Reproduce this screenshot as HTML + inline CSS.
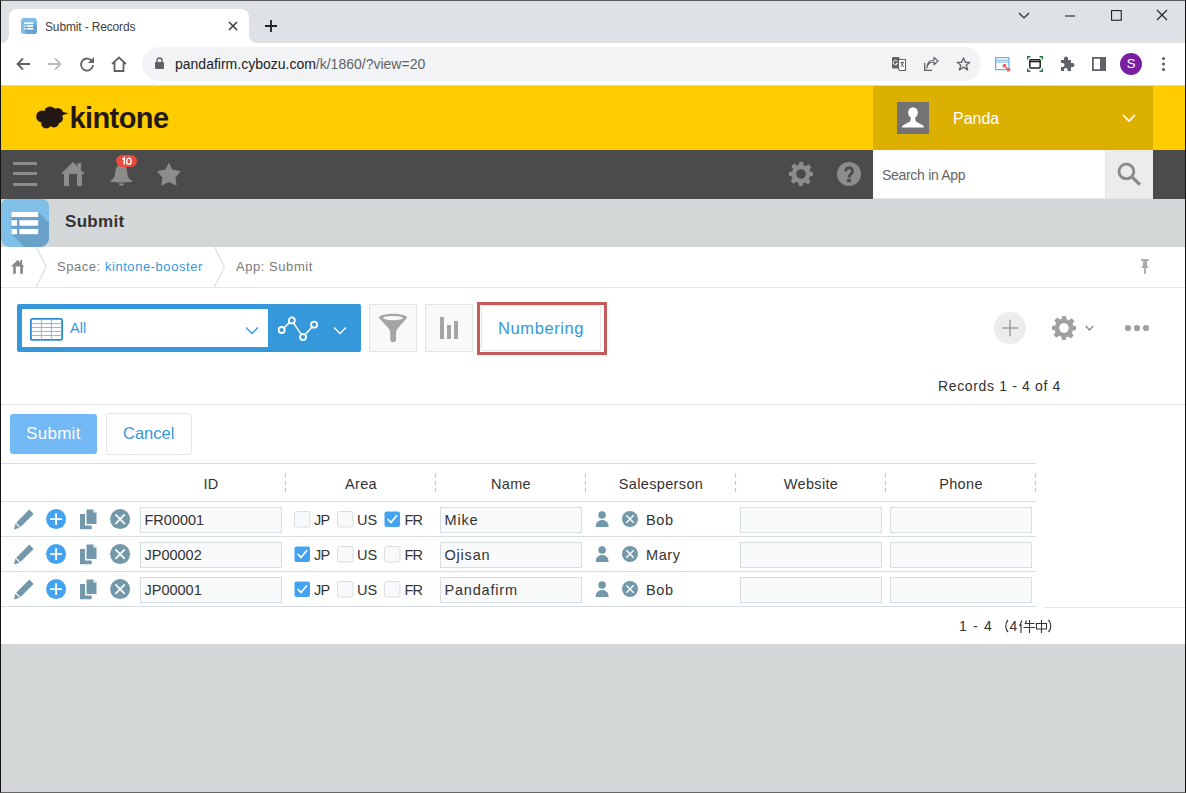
<!DOCTYPE html>
<html><head><meta charset="utf-8">
<style>
*{box-sizing:border-box;margin:0;padding:0}
html,body{width:1186px;height:793px;overflow:hidden;background:#d4d7d7;font-family:"Liberation Sans",sans-serif}
.a{position:absolute}
svg{position:absolute;overflow:visible}
#frame{position:absolute;left:0;top:0;width:1186px;height:793px;border:1px solid #141414;border-top-color:#58595b;border-bottom-color:#666;pointer-events:none;z-index:50}
</style></head><body>
<!-- ===== Chrome tab strip ===== -->
<div class="a" style="left:0;top:0;width:1186px;height:43px;background:#dee1e6"></div>
<div class="a" style="left:9px;top:9px;width:240px;height:34px;background:#fff;border-radius:8px 8px 0 0"></div>
<!-- tab bottom flares -->
<div class="a" style="left:1px;top:35px;width:8px;height:8px;background:#fff"></div>
<div class="a" style="left:1px;top:35px;width:8px;height:8px;background:#dee1e6;border-radius:0 0 8px 0"></div>
<div class="a" style="left:249px;top:35px;width:8px;height:8px;background:#fff"></div>
<div class="a" style="left:249px;top:35px;width:8px;height:8px;background:#dee1e6;border-radius:0 0 0 8px"></div>
<!-- favicon -->
<svg style="left:21px;top:18px" width="16" height="16"><defs><clipPath id="fc"><rect width="16" height="16" rx="3"/></clipPath></defs><g clip-path="url(#fc)">
<rect width="16" height="16" fill="#7dbde6"/><path d="M3.2 4.3H12.3L20 12V20H7.7L3.2 11.6Z" fill="#66a3d3"/>
<rect x="3.2" y="4.3" width="9.1" height="1.9" fill="#fff"/><rect x="3.2" y="7.3" width="1.5" height="1.6" fill="#fff"/><rect x="5.7" y="7.3" width="6.6" height="1.6" fill="#fff"/>
<rect x="3.2" y="10" width="1.5" height="1.6" fill="#fff"/><rect x="5.7" y="10" width="6.6" height="1.6" fill="#fff"/></g></svg>
<div class="a" style="left:45px;top:19px;font-size:12px;color:#3c4043;line-height:16px;letter-spacing:-0.15px">Submit - Records</div>
<svg style="left:228px;top:21px" width="10" height="10"><path d="M1 1L9 9M9 1L1 9" stroke="#3c4043" stroke-width="1.6"/></svg>
<svg style="left:265px;top:20px" width="12" height="12"><path d="M6 0V12M0 6H12" stroke="#202124" stroke-width="1.8"/></svg>
<!-- window controls -->
<svg style="left:1018px;top:11.5px" width="12" height="8"><path d="M1 1L6 6L11 1" fill="none" stroke="#202124" stroke-width="1.1"/></svg>
<svg style="left:1065px;top:14.5px" width="10" height="2"><path d="M0 1H10" stroke="#202124" stroke-width="1.1"/></svg>
<svg style="left:1110.5px;top:9.5px" width="11" height="11"><rect x="0.55" y="0.55" width="9.7" height="9.7" fill="none" stroke="#202124" stroke-width="1.1"/></svg>
<svg style="left:1157px;top:10px" width="10" height="10"><path d="M0 0L10 10M10 0L0 10" stroke="#202124" stroke-width="1.1"/></svg>

<!-- ===== Chrome toolbar ===== -->
<div class="a" style="left:0;top:43px;width:1186px;height:42px;background:#fff"></div>
<svg style="left:16px;top:57px" width="14" height="14"><path d="M14 7H2M7 1.5L1.5 7L7 12.5" fill="none" stroke="#5f6368" stroke-width="1.8"/></svg>
<svg style="left:48px;top:57px" width="14" height="14"><path d="M0 7H12M7 1.5L12.5 7L7 12.5" fill="none" stroke="#b8babd" stroke-width="1.8"/></svg>
<svg style="left:80px;top:57px" width="14" height="14"><path d="M12.2 4.5A6 6 0 1 0 13 8" fill="none" stroke="#5f6368" stroke-width="1.8"/><path d="M14 0V6H8Z" fill="#5f6368"/></svg>
<svg style="left:111px;top:56px" width="16" height="16"><path d="M1 8L8 1.5L15 8M3.5 6V15H12.5V6" fill="none" stroke="#5f6368" stroke-width="1.8"/></svg>
<div class="a" style="left:142px;top:47px;width:839px;height:34px;background:#f1f3f4;border-radius:17px"></div>
<svg style="left:155px;top:57px" width="9" height="12"><path d="M2 5V3.5A2.5 2.5 0 0 1 7 3.5V5" fill="none" stroke="#5f6368" stroke-width="1.4"/><rect x="0" y="5" width="9" height="7" rx="1" fill="#5f6368"/></svg>
<div class="a" style="left:175px;top:56px;font-size:14px;color:#202124;line-height:17px">pandafirm.cybozu.com<span style="color:#5f6368">/k/1860/?view=20</span></div>
<!-- translate -->
<svg style="left:892px;top:57px" width="15" height="15"><rect x="0" y="0" width="7.5" height="11.5" rx="1" fill="#5f6368"/><path d="M6.5 2.5H13.5V13.5H7.5L6.5 11.5Z" fill="#fff" stroke="#5f6368" stroke-width="1.1"/>
<path d="M5.3 4.3A2.2 2.2 0 1 0 5.5 6.5H3.8" fill="none" stroke="#fff" stroke-width="0.9"/><path d="M8.5 5.5H12M10.2 4.5V5.5M9 6L11.8 10M11.5 6L8.8 10" fill="none" stroke="#5f6368" stroke-width="0.9"/></svg>
<!-- share -->
<svg style="left:924px;top:57px" width="15" height="14"><path d="M0.7 6V13.3H8" fill="none" stroke="#5f6368" stroke-width="1.3"/><path d="M2.8 11C3.5 7 6.5 5 10 5V7.8L14 4L10 0.5V3C6 3.2 3 6 2.8 11Z" fill="none" stroke="#5f6368" stroke-width="1.2" stroke-linejoin="round"/></svg>
<!-- star -->
<svg style="left:955.5px;top:57px" width="15" height="14"><path d="M7.5 1L9.3 5.3H13.9L10.2 8.2L11.6 12.9L7.5 10.1L3.4 12.9L4.8 8.2L1.1 5.3H5.7Z" fill="none" stroke="#5f6368" stroke-width="1.3" stroke-linejoin="round"/></svg>
<!-- ext 1 -->
<svg style="left:995px;top:56.5px" width="16" height="15"><rect x="0.6" y="0.6" width="13.3" height="12" fill="#fff" stroke="#62b0ea" stroke-width="1.2"/><path d="M0.6 3.2H13.9M1 5H13.5" stroke="#62b0ea" stroke-width="0.9"/><path d="M8.5 7.8L14.5 13.8M8.5 7.8H11M8.5 7.8V10.3M14.5 13.8H12M14.5 13.8V11.3" fill="none" stroke="#f0584a" stroke-width="1.5"/></svg>
<!-- ext 2 -->
<svg style="left:1027px;top:56px" width="16" height="16"><path d="M0.7 3.5V0.7H3.5M12.5 0.7H15.3V3.5M15.3 12.5V15.3H12.5M3.5 15.3H0.7V12.5" fill="none" stroke="#188038" stroke-width="1.4"/><rect x="2.8" y="3.8" width="10.4" height="8.2" rx="1" fill="none" stroke="#202124" stroke-width="1.5"/><path d="M2.8 5.6H13.2" stroke="#202124" stroke-width="1.4"/></svg>
<!-- puzzle -->
<svg style="left:1059px;top:56px" width="16" height="16"><path d="M2 4H5V2.5A2 2 0 0 1 9 2.5V4H12V7H13.5A2 2 0 0 1 13.5 11H12V15H8.5V13.5A1.8 1.8 0 0 0 5 13.5V15H2V11H3.5A2 2 0 0 0 3.5 7H2Z" fill="#5f6368"/></svg>
<!-- sidebar -->
<svg style="left:1092px;top:57px" width="14" height="14"><rect x="0.9" y="0.9" width="12.2" height="12.2" fill="none" stroke="#5f6368" stroke-width="1.8"/><rect x="8" y="1" width="5" height="12" fill="#5f6368"/></svg>
<!-- avatar -->
<div class="a" style="left:1120px;top:53px;width:22px;height:22px;border-radius:50%;background:#7b1fa2;color:#fff;font-size:13px;line-height:22px;text-align:center">S</div>
<svg style="left:1161px;top:56px" width="5" height="16"><circle cx="2.5" cy="2.5" r="1.6" fill="#5f6368"/><circle cx="2.5" cy="8" r="1.6" fill="#5f6368"/><circle cx="2.5" cy="13.5" r="1.6" fill="#5f6368"/></svg>


<!-- ===== kintone header ===== -->
<div class="a" style="left:0;top:85px;width:1186px;height:1px;background:#d5d8e2"></div><div class="a" style="left:0;top:86px;width:1186px;height:64px;background:#ffcc00"></div>
<svg style="left:0;top:0" width="80" height="140"><g fill="#231815">
<circle cx="42.2" cy="116.5" r="6"/><circle cx="50.2" cy="112.4" r="6"/><circle cx="57.8" cy="113.2" r="5.3"/>
<circle cx="58.3" cy="118.5" r="4.6"/><circle cx="46.3" cy="123.4" r="5.1"/><circle cx="54" cy="122.5" r="5"/>
<circle cx="50" cy="118" r="6"/><path d="M61.5 111.8L68.6 113.3L61.8 115.5Z"/></g></svg>
<div class="a" style="left:69.5px;top:101px;font-size:29px;font-weight:bold;color:#231815;line-height:34px;letter-spacing:-0.6px">kintone</div>
<div class="a" style="left:873px;top:86px;width:280px;height:64px;background:#dbb000"></div>
<div class="a" style="left:897px;top:102px;width:32px;height:32px;background:#737373;overflow:hidden">
<svg style="left:0;top:0" width="32" height="32"><ellipse cx="16" cy="10.6" rx="4.9" ry="5.4" fill="#fff"/><path d="M4.9 25.6C5 23.5 8.5 22 13.2 19.6L14 15H18L18.8 19.6C23.5 22 27 23.5 27.1 25.6Z" fill="#fff"/></svg></div>
<div class="a" style="left:953px;top:109px;font-size:16px;color:#fff;line-height:19px">Panda</div>
<svg style="left:1122px;top:114px" width="14" height="9"><path d="M1 1L7 7L13 1" fill="none" stroke="#fff" stroke-width="1.6"/></svg>

<!-- nav bar -->
<div class="a" style="left:0;top:150px;width:1186px;height:49px;background:#4b4b4b"></div>
<div class="a" style="left:13px;top:162px;width:24px;height:3px;background:#8c8c8c"></div>
<div class="a" style="left:13px;top:172px;width:24px;height:3px;background:#8c8c8c"></div>
<div class="a" style="left:13px;top:183px;width:24px;height:3px;background:#8c8c8c"></div>
<svg style="left:0;top:0" width="200" height="200"><g fill="#8c8c8c">
<path d="M73 161.8L61 174H85Z"/><rect x="77.4" y="163" width="3.8" height="6"/><rect x="64" y="173.5" width="5" height="12.6"/><rect x="77" y="173.5" width="5" height="12.6"/>
<path d="M121.5 164.5C116 164.5 115.5 170 115 174.5C114.5 178.5 112 180 110 181C110 182 112 182.4 121.2 182.4C130.4 182.4 132.4 182 132.4 181C130.4 180 128 178.5 127.5 174.5C127 170 127 164.5 121.5 164.5Z"/>
<path d="M118.8 183.6H124.1A2.65 2.2 0 0 1 118.8 183.6Z"/>
<path d="M168.9 162.5L172.2 169.5L180.8 171.3L175.4 177.4L176.6 185.8L168.9 182.1L161.2 185.8L162.4 177.4L157 171.3L165.6 169.5Z"/>
</g></svg>
<div class="a" style="left:116px;top:155px;width:21px;height:12px;border-radius:6px;background:#e74c3c"></div><svg style="left:116px;top:155px" width="21" height="12"><path d="M6.4 4.4L8.3 2.9V9.6" fill="none" stroke="#fff" stroke-width="1.5"/><ellipse cx="12.9" cy="6.25" rx="2.2" ry="3.15" fill="none" stroke="#fff" stroke-width="1.4"/></svg>
<!-- gear & help -->
<svg style="left:789px;top:162px" width="24" height="24" viewBox="0 0 24 24"><path fill="#8c8c8c" d="M10 0h4l.6 3.2a9 9 0 0 1 2.3 1l2.7-1.9 2.8 2.8-1.9 2.7a9 9 0 0 1 1 2.3L24 10v4l-3.2.6a9 9 0 0 1-1 2.3l1.9 2.7-2.8 2.8-2.7-1.9a9 9 0 0 1-2.3 1L14 24h-4l-.6-3.2a9 9 0 0 1-2.3-1l-2.7 1.9-2.8-2.8 1.9-2.7a9 9 0 0 1-1-2.3L0 14v-4l3.2-.6a9 9 0 0 1 1-2.3L2.3 4.4l2.8-2.8 2.7 1.9a9 9 0 0 1 2.3-1zM12 7.2a4.8 4.8 0 1 0 0 9.6 4.8 4.8 0 0 0 0-9.6z"/></svg>
<svg style="left:837px;top:162px" width="24" height="24"><circle cx="12" cy="12" r="12" fill="#8c8c8c"/><path d="M8.7 9.3A3.4 3.4 0 1 1 14.4 11.6C13 12.8 12.1 13.2 12.1 15.4" fill="none" stroke="#4b4b4b" stroke-width="2.9"/><rect x="10.1" y="16.9" width="3.8" height="3.3" fill="#4b4b4b"/></svg>
<div class="a" style="left:873px;top:150px;width:232px;height:48px;background:#fff"></div><div class="a" style="left:873px;top:198px;width:280px;height:1px;background:#e6e8e8"></div>
<div class="a" style="left:882px;top:167px;font-size:14px;color:#666;line-height:17px;letter-spacing:-0.3px">Search in App</div>
<div class="a" style="left:1105px;top:150px;width:48px;height:48px;background:#ececec;border-left:1px solid #e3e5e6"></div>
<svg style="left:1116px;top:162px" width="26" height="26"><circle cx="10.4" cy="9.4" r="7.4" fill="none" stroke="#8c8c8c" stroke-width="2.9"/><path d="M15.3 14.3L23.9 22.6" stroke="#8c8c8c" stroke-width="3.3"/></svg>

<!-- app title bar -->
<div class="a" style="left:0;top:199px;width:1186px;height:48px;background:#d4d7d7"></div>
<div class="a" style="left:1px;top:199px;width:48px;height:48px;border-radius:7px 7px 9px 9px;background:#7fbfe8;overflow:hidden">
<svg style="left:0;top:0" width="48" height="48">
<path d="M10.5 13H37.2L50 25.8V50H25.5L10.5 35Z" fill="#69a1c9"/>
<rect x="10.5" y="13" width="26.7" height="5" fill="#fff"/>
<rect x="10.5" y="21.2" width="5.5" height="5.5" fill="#fff"/><rect x="18.4" y="21.2" width="18.8" height="5.5" fill="#fff"/>
<rect x="10.5" y="30" width="5.5" height="5.2" fill="#fff"/><rect x="18.4" y="30" width="18.8" height="5.2" fill="#fff"/>
</svg></div>
<div class="a" style="left:65px;top:212px;font-size:17px;font-weight:bold;color:#333;line-height:20px;letter-spacing:0.3px">Submit</div>


<!-- content white -->
<div class="a" style="left:0;top:247px;width:1186px;height:397px;background:#fff"></div>
<!-- breadcrumb -->
<div class="a" style="left:0;top:287px;width:1186px;height:1px;background:#e3e7e8"></div>
<svg style="left:0;top:0" width="300" height="300"><g fill="#888">
<path d="M17.6 259.9L11 266.6H24.4Z"/><rect x="20.2" y="260" width="1.9" height="4"/><rect x="13.2" y="266" width="2.6" height="7.8"/><rect x="20.2" y="266" width="2.7" height="7.8"/></g>
<path d="M36.2 247L46.2 266.8L36 287.5M214.4 247L224.5 266.8L214.2 287.5" fill="none" stroke="#dfe3e5" stroke-width="1.35"/>
</svg>
<div class="a" style="left:57px;top:259px;font-size:13px;color:#7a7a7a;line-height:16px;white-space:nowrap;letter-spacing:0.55px">Space: <span style="color:#3498db">kintone-booster</span></div>
<div class="a" style="left:236px;top:259px;font-size:13px;color:#7a7a7a;line-height:16px;white-space:nowrap;letter-spacing:0.55px">App: Submit</div>
<svg style="left:1140px;top:258px" width="10" height="17"><g fill="#aaa"><rect x="1" y="1" width="7.7" height="1.9"/><rect x="3" y="2.5" width="4" height="6"/><path d="M3 7.5H7L8.8 9.9H1.2Z"/><rect x="4.1" y="9.8" width="1.8" height="6.2"/></g></svg>

<!-- view selector -->
<div class="a" style="left:17px;top:304px;width:344px;height:48px;background:#3498db;border-radius:2px"></div>
<div class="a" style="left:22px;top:309px;width:246px;height:38px;background:#fff"></div>
<svg style="left:29px;top:317px" width="35" height="25"><rect x="1.9" y="1.9" width="31.2" height="21" rx="1.5" fill="none" stroke="#2f8fd6" stroke-width="1.9"/>
<path d="M2 6.6H33M2 10.5H33M2 14.5H33M2 18.5H33M12.4 2V23M22.4 2V23" stroke="#76b5e5" stroke-width="0.9"/></svg>
<div class="a" style="left:70px;top:320px;font-size:14.5px;color:#3498db;line-height:17px">All</div>
<svg style="left:245px;top:325.7px" width="14" height="9"><path d="M1 1.5L7 7.5L13 1.5" fill="none" stroke="#3498db" stroke-width="1.3"/></svg>
<svg style="left:275px;top:315px" width="45" height="28"><path d="M6.7 15L16.8 5.4L28 22.1L39.1 9.7" fill="none" stroke="#fff" stroke-width="1.5"/>
<g fill="#3498db" stroke="#fff" stroke-width="1.8"><circle cx="6.7" cy="15" r="3"/><circle cx="16.8" cy="5.4" r="3"/><circle cx="28" cy="22.1" r="3"/><circle cx="39.1" cy="9.7" r="3"/></g></svg>
<svg style="left:333px;top:325.7px" width="14" height="9"><path d="M1 1.5L7 7.5L13 1.5" fill="none" stroke="#fff" stroke-width="1.3"/></svg>

<!-- filter & chart -->
<div class="a" style="left:369px;top:304px;width:48px;height:48px;background:#f7f9fa;border:1px solid #e3e7e8"></div>
<svg style="left:377px;top:312px" width="32" height="32"><path d="M1.9 5.8A14.1 4 0 0 1 30.1 5.8L21.5 15.5Q19.3 18 19.1 20V27.7A2.95 2.4 0 0 1 13.2 27.7V20Q13 18 10.8 15.5Z" fill="#a5a5a5"/><ellipse cx="16" cy="6.1" rx="10" ry="2.1" fill="#f7f9fa"/></svg>
<div class="a" style="left:425px;top:304px;width:48px;height:48px;background:#f7f9fa;border:1px solid #e3e7e8"></div>
<div class="a" style="left:440px;top:317px;width:4.1px;height:22px;background:#a5a5a5"></div>
<div class="a" style="left:447px;top:325px;width:4.1px;height:14px;background:#a5a5a5"></div>
<div class="a" style="left:454px;top:321px;width:4.1px;height:18px;background:#a5a5a5"></div>
<!-- numbering -->
<div class="a" style="left:481px;top:305px;width:120px;height:46px;background:#fff;border:1px solid #e3e7e8;border-radius:3px"></div>
<div class="a" style="left:477px;top:302px;width:130px;height:53px;border:3px solid #c55a5a"></div>
<div class="a" style="left:498px;top:318px;font-size:16.5px;color:#3498db;line-height:20px;letter-spacing:0.6px">Numbering</div>

<!-- right tools -->
<div class="a" style="left:994px;top:312px;width:32px;height:32px;border-radius:50%;background:#ececec"></div>
<svg style="left:1002px;top:320px" width="16" height="16"><path d="M8 0V16M0 8H16" stroke="#a0a0a0" stroke-width="1.6"/></svg>
<svg style="left:1052px;top:316px" width="24" height="24" viewBox="0 0 24 24"><path fill="#a0a0a0" d="M10 0h4l.6 3.2a9 9 0 0 1 2.3 1l2.7-1.9 2.8 2.8-1.9 2.7a9 9 0 0 1 1 2.3L24 10v4l-3.2.6a9 9 0 0 1-1 2.3l1.9 2.7-2.8 2.8-2.7-1.9a9 9 0 0 1-2.3 1L14 24h-4l-.6-3.2a9 9 0 0 1-2.3-1l-2.7 1.9-2.8-2.8 1.9-2.7a9 9 0 0 1-1-2.3L0 14v-4l3.2-.6a9 9 0 0 1 1-2.3L2.3 4.4l2.8-2.8 2.7 1.9a9 9 0 0 1 2.3-1zM12 7.2a4.8 4.8 0 1 0 0 9.6 4.8 4.8 0 0 0 0-9.6z"/></svg>
<svg style="left:1085px;top:325px" width="9" height="7"><path d="M0.8 1L4.5 5L8.2 1" fill="none" stroke="#888" stroke-width="1.4"/></svg>
<svg style="left:1124px;top:324px" width="28" height="8"><g fill="#a0a0a0"><circle cx="4" cy="4" r="3.1"/><circle cx="13" cy="4" r="3.1"/><circle cx="22" cy="4" r="3.1"/></g></svg>
<div class="a" style="left:938px;top:378px;font-size:14px;color:#333;line-height:16px;white-space:nowrap;letter-spacing:0.65px">Records 1 - 4 of 4</div>
<div class="a" style="left:0;top:404px;width:1186px;height:1px;background:#e3e7e8"></div>

<!-- submit/cancel -->
<div class="a" style="left:10px;top:414px;width:87px;height:40px;background:#72b9f5;border-radius:3px"></div>
<div class="a" style="left:26px;top:424px;font-size:17px;color:#fff;line-height:20px;letter-spacing:0.3px">Submit</div>
<div class="a" style="left:106px;top:413px;width:86px;height:42px;background:#fff;border:1px solid #e3e7e8;border-radius:3px"></div>
<div class="a" style="left:123px;top:423px;font-size:16.5px;color:#3498db;line-height:20px">Cancel</div>
<!--TABLE-->
<div class="a" style="left:1px;top:463px;width:1035px;height:1px;background:#d6dee1"></div>
<div class="a" style="left:1px;top:501px;width:1035px;height:1px;background:#d6dee1"></div>
<div class="a" style="left:1px;top:536px;width:1035px;height:1px;background:#d6dee1"></div>
<div class="a" style="left:1px;top:571px;width:1035px;height:1px;background:#d6dee1"></div>
<div class="a" style="left:1px;top:606px;width:1035px;height:1px;background:#d6dee1"></div>
<div class="a" style="left:1044px;top:607px;width:142px;height:1px;background:#e3e7e8"></div>
<div class="a" style="left:136px;top:476px;width:150px;text-align:center;font-size:14.5px;color:#333;line-height:17px;letter-spacing:0.35px">ID</div>
<div class="a" style="left:286px;top:476px;width:150px;text-align:center;font-size:14.5px;color:#333;line-height:17px;letter-spacing:0.35px">Area</div>
<div class="a" style="left:436px;top:476px;width:150px;text-align:center;font-size:14.5px;color:#333;line-height:17px;letter-spacing:0.35px">Name</div>
<div class="a" style="left:586px;top:476px;width:150px;text-align:center;font-size:14.5px;color:#333;line-height:17px;letter-spacing:0.35px">Salesperson</div>
<div class="a" style="left:736px;top:476px;width:150px;text-align:center;font-size:14.5px;color:#333;line-height:17px;letter-spacing:0.35px">Website</div>
<div class="a" style="left:886px;top:476px;width:150px;text-align:center;font-size:14.5px;color:#333;line-height:17px;letter-spacing:0.35px">Phone</div>
<svg style="left:0;top:0" width="1100" height="500"><path d="M285.5 473.3V492" stroke="#c4c4c4" stroke-width="1.1" stroke-dasharray="4.2 3.2"/><path d="M435.5 473.3V492" stroke="#c4c4c4" stroke-width="1.1" stroke-dasharray="4.2 3.2"/><path d="M585.5 473.3V492" stroke="#c4c4c4" stroke-width="1.1" stroke-dasharray="4.2 3.2"/><path d="M735.5 473.3V492" stroke="#c4c4c4" stroke-width="1.1" stroke-dasharray="4.2 3.2"/><path d="M885.5 473.3V492" stroke="#c4c4c4" stroke-width="1.1" stroke-dasharray="4.2 3.2"/><path d="M1035.5 473.3V492" stroke="#c4c4c4" stroke-width="1.1" stroke-dasharray="4.2 3.2"/></svg>
<svg style="left:0;top:501px" width="700" height="35"><path d="M29.3 8.6L33.6 12.9L20.5 26L16.2 21.7Z" fill="#7298aa"/><path d="M15.4 22.6L19.6 26.8L14 28.5Z" fill="#7298aa"/><circle cx="56.1" cy="18.1" r="10" fill="#44a3f0"/><path d="M50.2 18.1H62M56.1 12.2V24" stroke="#fff" stroke-width="1.9"/><path d="M80 13H85V24.5H91.7V28.3H80Z" fill="#7298aa"/><path d="M86 8H93.5L97 11.5V23.5H86Z" fill="#7298aa" stroke="#fff" stroke-width="1"/><path d="M93.5 8.5V11.5H96.5Z" fill="#fff"/><circle cx="120.1" cy="18.1" r="10" fill="#7298aa"/><path d="M115.4 13.4L124.8 22.8M124.8 13.4L115.4 22.8" stroke="#fff" stroke-width="1.7"/><rect x="294.5" y="10.5" width="15.5" height="15.5" rx="2" fill="#f7f9fa" stroke="#d6dee1" stroke-width="1"/><rect x="337.5" y="10.5" width="15.5" height="15.5" rx="2" fill="#f7f9fa" stroke="#d6dee1" stroke-width="1"/><rect x="384.5" y="10.5" width="15.5" height="15.5" rx="2" fill="#44a3f0"/><path d="M387.7 18L391.0 21.5L397.0 14.2" fill="none" stroke="#fff" stroke-width="1.7"/><circle cx="602.1" cy="14" r="3.8" fill="#7298aa"/><path d="M595.8 26V25C595.8 21.5 598.5 19 602.15 19C605.8 19 608.5 21.5 608.5 25V26Z" fill="#7298aa"/><circle cx="630" cy="18" r="8" fill="#7298aa"/><path d="M626.3 14.3L633.7 21.7M633.7 14.3L626.3 21.7" stroke="#fff" stroke-width="1.4"/></svg>
<div class="a" style="left:140px;top:507px;width:142px;height:26px;background:#f9fafb;border:1px solid #d6dee1"></div>
<div class="a" style="left:440px;top:507px;width:142px;height:26px;background:#f9fafb;border:1px solid #d6dee1"></div>
<div class="a" style="left:740px;top:507px;width:142px;height:26px;background:#f9fafb;border:1px solid #d6dee1"></div>
<div class="a" style="left:890px;top:507px;width:142px;height:26px;background:#f9fafb;border:1px solid #d6dee1"></div>
<div class="a" style="left:144.5px;top:512px;font-size:14.5px;color:#333;line-height:17px">FR00001</div>
<div class="a" style="left:444.5px;top:512px;font-size:14.5px;color:#333;line-height:17px;letter-spacing:0.8px">Mike</div>
<div class="a" style="left:314px;top:512px;font-size:14.5px;color:#333;line-height:17px;letter-spacing:-0.8px">JP</div>
<div class="a" style="left:357px;top:512px;font-size:14.5px;color:#333;line-height:17px">US</div>
<div class="a" style="left:404.5px;top:512px;font-size:14.5px;color:#333;line-height:17px;letter-spacing:-0.8px">FR</div>
<div class="a" style="left:646px;top:512px;font-size:14.5px;color:#333;line-height:17px;letter-spacing:0.6px">Bob</div>
<svg style="left:0;top:536px" width="700" height="35"><path d="M29.3 8.6L33.6 12.9L20.5 26L16.2 21.7Z" fill="#7298aa"/><path d="M15.4 22.6L19.6 26.8L14 28.5Z" fill="#7298aa"/><circle cx="56.1" cy="18.1" r="10" fill="#44a3f0"/><path d="M50.2 18.1H62M56.1 12.2V24" stroke="#fff" stroke-width="1.9"/><path d="M80 13H85V24.5H91.7V28.3H80Z" fill="#7298aa"/><path d="M86 8H93.5L97 11.5V23.5H86Z" fill="#7298aa" stroke="#fff" stroke-width="1"/><path d="M93.5 8.5V11.5H96.5Z" fill="#fff"/><circle cx="120.1" cy="18.1" r="10" fill="#7298aa"/><path d="M115.4 13.4L124.8 22.8M124.8 13.4L115.4 22.8" stroke="#fff" stroke-width="1.7"/><rect x="294.5" y="10.5" width="15.5" height="15.5" rx="2" fill="#44a3f0"/><path d="M297.7 18L301.0 21.5L307.0 14.2" fill="none" stroke="#fff" stroke-width="1.7"/><rect x="337.5" y="10.5" width="15.5" height="15.5" rx="2" fill="#f7f9fa" stroke="#d6dee1" stroke-width="1"/><rect x="384.5" y="10.5" width="15.5" height="15.5" rx="2" fill="#f7f9fa" stroke="#d6dee1" stroke-width="1"/><circle cx="602.1" cy="14" r="3.8" fill="#7298aa"/><path d="M595.8 26V25C595.8 21.5 598.5 19 602.15 19C605.8 19 608.5 21.5 608.5 25V26Z" fill="#7298aa"/><circle cx="630" cy="18" r="8" fill="#7298aa"/><path d="M626.3 14.3L633.7 21.7M633.7 14.3L626.3 21.7" stroke="#fff" stroke-width="1.4"/></svg>
<div class="a" style="left:140px;top:542px;width:142px;height:26px;background:#f9fafb;border:1px solid #d6dee1"></div>
<div class="a" style="left:440px;top:542px;width:142px;height:26px;background:#f9fafb;border:1px solid #d6dee1"></div>
<div class="a" style="left:740px;top:542px;width:142px;height:26px;background:#f9fafb;border:1px solid #d6dee1"></div>
<div class="a" style="left:890px;top:542px;width:142px;height:26px;background:#f9fafb;border:1px solid #d6dee1"></div>
<div class="a" style="left:144.5px;top:547px;font-size:14.5px;color:#333;line-height:17px">JP00002</div>
<div class="a" style="left:444.5px;top:547px;font-size:14.5px;color:#333;line-height:17px;letter-spacing:0.8px">Ojisan</div>
<div class="a" style="left:314px;top:547px;font-size:14.5px;color:#333;line-height:17px;letter-spacing:-0.8px">JP</div>
<div class="a" style="left:357px;top:547px;font-size:14.5px;color:#333;line-height:17px">US</div>
<div class="a" style="left:404.5px;top:547px;font-size:14.5px;color:#333;line-height:17px;letter-spacing:-0.8px">FR</div>
<div class="a" style="left:646px;top:547px;font-size:14.5px;color:#333;line-height:17px;letter-spacing:0.6px">Mary</div>
<svg style="left:0;top:571px" width="700" height="35"><path d="M29.3 8.6L33.6 12.9L20.5 26L16.2 21.7Z" fill="#7298aa"/><path d="M15.4 22.6L19.6 26.8L14 28.5Z" fill="#7298aa"/><circle cx="56.1" cy="18.1" r="10" fill="#44a3f0"/><path d="M50.2 18.1H62M56.1 12.2V24" stroke="#fff" stroke-width="1.9"/><path d="M80 13H85V24.5H91.7V28.3H80Z" fill="#7298aa"/><path d="M86 8H93.5L97 11.5V23.5H86Z" fill="#7298aa" stroke="#fff" stroke-width="1"/><path d="M93.5 8.5V11.5H96.5Z" fill="#fff"/><circle cx="120.1" cy="18.1" r="10" fill="#7298aa"/><path d="M115.4 13.4L124.8 22.8M124.8 13.4L115.4 22.8" stroke="#fff" stroke-width="1.7"/><rect x="294.5" y="10.5" width="15.5" height="15.5" rx="2" fill="#44a3f0"/><path d="M297.7 18L301.0 21.5L307.0 14.2" fill="none" stroke="#fff" stroke-width="1.7"/><rect x="337.5" y="10.5" width="15.5" height="15.5" rx="2" fill="#f7f9fa" stroke="#d6dee1" stroke-width="1"/><rect x="384.5" y="10.5" width="15.5" height="15.5" rx="2" fill="#f7f9fa" stroke="#d6dee1" stroke-width="1"/><circle cx="602.1" cy="14" r="3.8" fill="#7298aa"/><path d="M595.8 26V25C595.8 21.5 598.5 19 602.15 19C605.8 19 608.5 21.5 608.5 25V26Z" fill="#7298aa"/><circle cx="630" cy="18" r="8" fill="#7298aa"/><path d="M626.3 14.3L633.7 21.7M633.7 14.3L626.3 21.7" stroke="#fff" stroke-width="1.4"/></svg>
<div class="a" style="left:140px;top:577px;width:142px;height:26px;background:#f9fafb;border:1px solid #d6dee1"></div>
<div class="a" style="left:440px;top:577px;width:142px;height:26px;background:#f9fafb;border:1px solid #d6dee1"></div>
<div class="a" style="left:740px;top:577px;width:142px;height:26px;background:#f9fafb;border:1px solid #d6dee1"></div>
<div class="a" style="left:890px;top:577px;width:142px;height:26px;background:#f9fafb;border:1px solid #d6dee1"></div>
<div class="a" style="left:144.5px;top:582px;font-size:14.5px;color:#333;line-height:17px">JP00001</div>
<div class="a" style="left:444.5px;top:582px;font-size:14.5px;color:#333;line-height:17px;letter-spacing:0.8px">Pandafirm</div>
<div class="a" style="left:314px;top:582px;font-size:14.5px;color:#333;line-height:17px;letter-spacing:-0.8px">JP</div>
<div class="a" style="left:357px;top:582px;font-size:14.5px;color:#333;line-height:17px">US</div>
<div class="a" style="left:404.5px;top:582px;font-size:14.5px;color:#333;line-height:17px;letter-spacing:-0.8px">FR</div>
<div class="a" style="left:646px;top:582px;font-size:14.5px;color:#333;line-height:17px;letter-spacing:0.6px">Bob</div>
<div class="a" style="left:959px;top:618px;font-size:14px;color:#333;line-height:16px;white-space:nowrap;letter-spacing:1.2px">1 - 4</div>
<svg style="left:1000px;top:617px" width="60" height="18"><g fill="none" stroke="#333" stroke-width="1.1">
<path d="M8 3C5 6 5 12 8 15"/>
<path d="M48.5 3C51.5 6 51.5 12 48.5 15"/>
</g>
<text x="9.5" y="14" font-family="Liberation Sans" font-size="14" fill="#333">4</text>
<g fill="none" stroke="#333" stroke-width="1.1">
<path d="M22 3.5L19.5 9M21 7V16M26.5 3.5L25 7M24.8 6.5H34.5M23.5 10.5H35M29.5 3V16"/>
<path d="M36.5 6.5H46.5V12H36.5ZM41.5 3V16"/>
</g></svg>
<div id="frame"></div>
</body></html>
